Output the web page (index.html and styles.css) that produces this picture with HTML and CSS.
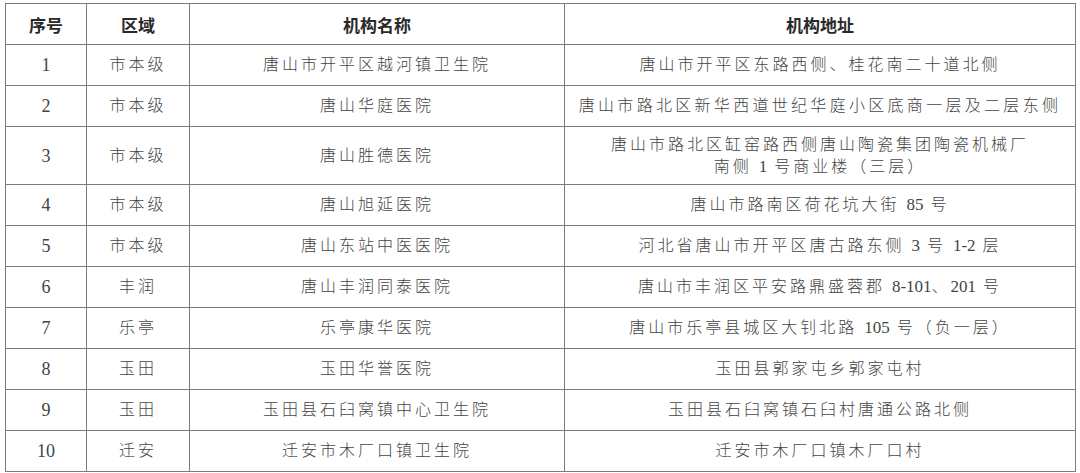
FILE: index.html
```html
<!DOCTYPE html>
<html lang="zh-CN">
<head>
<meta charset="utf-8">
<title>机构列表</title>
<link rel="stylesheet" href="styles.css">
</head>
<body>
<table class="list">
  <colgroup>
    <col class="c-no">
    <col class="c-area">
    <col class="c-name">
    <col class="c-addr">
  </colgroup>
  <thead>
    <tr class="head">
      <th>序号</th>
      <th>区域</th>
      <th>机构名称</th>
      <th>机构地址</th>
    </tr>
  </thead>
  <tbody>
    <tr><td class="num">1</td><td>市本级</td><td>唐山市开平区越河镇卫生院</td><td>唐山市开平区东路西侧、桂花南二十道北侧</td></tr>
    <tr><td class="num">2</td><td>市本级</td><td>唐山华庭医院</td><td class="tight">唐山市路北区新华西道世纪华庭小区底商一层及二层东侧</td></tr>
    <tr class="tall"><td class="num">3</td><td>市本级</td><td>唐山胜德医院</td><td>唐山市路北区缸窑路西侧唐山陶瓷集团陶瓷机械厂<br>南侧 <span class="lat">1</span> 号商业楼（三层）</td></tr>
    <tr><td class="num">4</td><td>市本级</td><td>唐山旭延医院</td><td>唐山市路南区荷花坑大街 <span class="lat">85</span> 号</td></tr>
    <tr><td class="num">5</td><td>市本级</td><td>唐山东站中医医院</td><td>河北省唐山市开平区唐古路东侧 <span class="lat">3</span> 号 <span class="lat">1-2</span> 层</td></tr>
    <tr><td class="num">6</td><td>丰润</td><td>唐山丰润同泰医院</td><td>唐山市丰润区平安路鼎盛蓉郡 <span class="lat">8-101</span>、<span class="lat">201</span> 号</td></tr>
    <tr><td class="num">7</td><td>乐亭</td><td>乐亭康华医院</td><td>唐山市乐亭县城区大钊北路 <span class="lat">105</span> 号（负一层）</td></tr>
    <tr><td class="num">8</td><td>玉田</td><td>玉田华誉医院</td><td>玉田县郭家屯乡郭家屯村</td></tr>
    <tr><td class="num">9</td><td>玉田</td><td>玉田县石臼窝镇中心卫生院</td><td>玉田县石臼窝镇石臼村唐通公路北侧</td></tr>
    <tr><td class="num">10</td><td>迁安</td><td>迁安市木厂口镇卫生院</td><td>迁安市木厂口镇木厂口村</td></tr>
  </tbody>
</table>
</body>
</html>
```

FILE: styles.css
```css
html, body {
  margin: 0;
  padding: 0;
  background: #ffffff;
}

body {
  padding: 3px 5px 0 5px;
}

.list {
  border-collapse: collapse;
  table-layout: fixed;
  width: 1070px;
  font-family: "Liberation Serif", "Noto Sans CJK SC", serif;
  color: #444444;
}

.c-no { width: 81px; }
.c-area { width: 103px; }
.c-name { width: 375px; }
.c-addr { width: 511px; }

.list th,
.list td {
  border: 1px solid #7c7c7c;
  padding: 0;
  text-align: center;
  vertical-align: middle;
}

.list th {
  font-family: "Noto Sans CJK SC", sans-serif;
  font-weight: 700;
  font-size: 17px;
  color: #2a2a2a;
  height: 40px;
}

.list td {
  font-size: 16px;
  font-weight: 300;
  letter-spacing: 3px;
  line-height: 22px;
  height: 40px;
}

.list td.tight {
  letter-spacing: 3.3px;
}

.list td .lat {
  font-size: 17px;
  letter-spacing: 0;
}

.list td.num {
  font-size: 18px;
  letter-spacing: 0;
  font-weight: 400;
}

.list tr.tall td {
  height: 57px;
}
```
